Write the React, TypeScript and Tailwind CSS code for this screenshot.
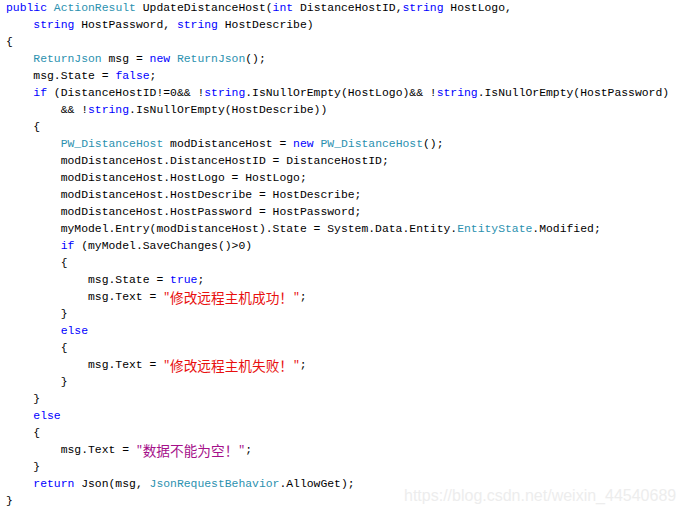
import React from 'react'

type Tok = [string, string?]

// k = keyword, t = type, s = string, s2 = darker string
const color: Record<string, string> = {
  k: 'text-[#0000ff]',
  t: 'text-[#2b91af]',
  s: 'text-[#e8100f]',
  s2: 'text-[#a5108a]',
}

const lines: Tok[][] = [
  [['public', 'k'], [' '], ['ActionResult', 't'], [' UpdateDistanceHost('], ['int', 'k'], [' DistanceHostID,'], ['string', 'k'], [' HostLogo,']],
  [['    '], ['string', 'k'], [' HostPassword, '], ['string', 'k'], [' HostDescribe)']],
  [['{']],
  [['    '], ['ReturnJson', 't'], [' msg = '], ['new', 'k'], [' '], ['ReturnJson', 't'], ['();']],
  [['    msg.State = '], ['false', 'k'], [';']],
  [['    '], ['if', 'k'], [' (DistanceHostID!=0&& !'], ['string', 'k'], ['.IsNullOrEmpty(HostLogo)&& !'], ['string', 'k'], ['.IsNullOrEmpty(HostPassword)']],
  [['        && !'], ['string', 'k'], ['.IsNullOrEmpty(HostDescribe))']],
  [['    {']],
  [['        '], ['PW_DistanceHost', 't'], [' modDistanceHost = '], ['new', 'k'], [' '], ['PW_DistanceHost', 't'], ['();']],
  [['        modDistanceHost.DistanceHostID = DistanceHostID;']],
  [['        modDistanceHost.HostLogo = HostLogo;']],
  [['        modDistanceHost.HostDescribe = HostDescribe;']],
  [['        modDistanceHost.HostPassword = HostPassword;']],
  [['        myModel.Entry(modDistanceHost).State = System.Data.Entity.'], ['EntityState', 't'], ['.Modified;']],
  [['        '], ['if', 'k'], [' (myModel.SaveChanges()>0)']],
  [['        {']],
  [['            msg.State = '], ['true', 'k'], [';']],
  [['            msg.Text = '], ['"', 's'], ['修改远程主机成功！', 'sc'], ['"', 's'], [';']],
  [['        }']],
  [['        '], ['else', 'k']],
  [['        {']],
  [['            msg.Text = '], ['"', 's'], ['修改远程主机失败！', 'sc'], ['"', 's'], [';']],
  [['        }']],
  [['    }']],
  [['    '], ['else', 'k']],
  [['    {']],
  [['        msg.Text = '], ['"', 's2'], ['数据不能为空！', 's2c'], ['"', 's2'], [';']],
  [['    }']],
  [['    '], ['return', 'k'], [' Json(msg, '], ['JsonRequestBehavior', 't'], ['.AllowGet);']],
  [['}']],
]

function Token({ text, kind }: { text: string; kind?: string }) {
  if (kind === 'sc') {
    return <span className="inline-block align-top h-[17px] leading-[17px] text-[#e8100f] text-[13.66px] font-['Noto_Sans_CJK_SC',sans-serif]">{text}</span>
  }
  if (kind === 's2c') {
    return <span className="inline-block align-top h-[17px] leading-[17px] text-[#a5108a] text-[13.66px] font-['Noto_Sans_CJK_SC',sans-serif]">{text}</span>
  }
  return <span className={kind ? color[kind] : 'text-black'}>{text}</span>
}

export default function App() {
  return (
    <div className="relative w-[686px] h-[515px] overflow-hidden bg-white">
      <div className="flex flex-col pl-[6px] font-['Liberation_Mono','Noto_Sans_CJK_SC',monospace] text-[11.4px]">
        {lines.map((line, i) => (
          <div key={i} className="h-[17px] leading-[17px] whitespace-pre">
            {line.map(([text, kind], j) => (
              <Token key={j} text={text} kind={kind} />
            ))}
          </div>
        ))}
      </div>

      {/* csdn watermark */}
      <div className="absolute left-[404px] top-[487px] text-[16px] leading-[18px] text-[#ededed] font-['Liberation_Sans',Arial,sans-serif]">
        https://blog.csdn.net/weixin_44540689
      </div>
    </div>
  )
}
